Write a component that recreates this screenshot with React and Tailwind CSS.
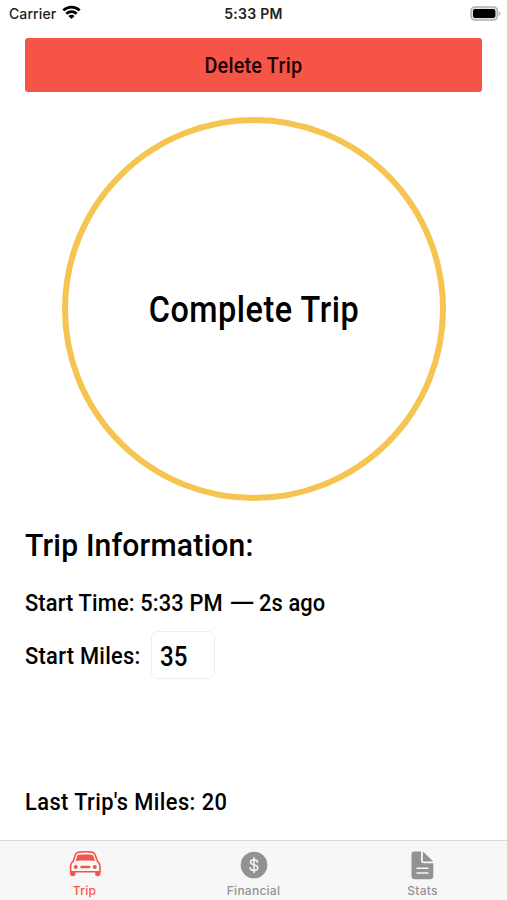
import clsx from 'clsx'

function WifiIcon() {
  return (
    <svg width="19" height="15" viewBox="0 0 19 15" fill="none" stroke="#000" strokeWidth="2.7">
      <path d="M1.3 5.4C5.9 .9 13.1 .9 17.7 5.4" />
      <path d="M4.3 8.7C7.3 5.9 11.7 5.9 14.7 8.7" />
      <path d="M9.5 14L6.4 10.9C8.2 9.4 10.8 9.4 12.6 10.9Z" fill="#000" stroke="none" />
    </svg>
  )
}

function BatteryIcon() {
  return (
    <svg width="31" height="15" viewBox="0 0 31 15">
      <rect x="1" y=".9" width="26.4" height="13.2" rx="4" fill="#e4e4e4" stroke="#b0b0b0" strokeWidth="1.5" />
      <rect x="3" y="2.9" width="22.4" height="9.2" rx="2" fill="#000" />
      <path d="M28.8 5.2C31 6 31 9 28.8 9.8Z" fill="#b0b0b0" />
    </svg>
  )
}

function CarIcon() {
  return (
    <svg width="33" height="26" viewBox="0 0 33 26" className="mb-[2px] ml-px">
      <g fill="none" stroke="currentColor" strokeWidth="1.6" strokeLinejoin="round">
        <path d="M4.2 10.2L6.5 3.6C7.2 1.8 8 1.3 10 1.1C14 .7 18.6 .7 22.6 1.1C24.6 1.3 25.4 1.8 26.1 3.6L28.4 10.2C30.5 11.8 31 13 31 15.3V20.8H1.6V15.3C1.6 13 2.1 11.8 4.2 10.2Z" />
      </g>
      <path d="M8.2 5C8.5 4.1 9 3.8 10 3.7C14.2 3.3 18.4 3.3 22.6 3.7C23.6 3.8 24.1 4.1 24.4 5L26 9.9C19.5 9.3 13.1 9.3 6.6 9.9Z" fill="currentColor" />
      <circle cx="6.8" cy="16" r="2" fill="currentColor" />
      <circle cx="25.8" cy="16" r="2" fill="currentColor" />
      <rect x="11.3" y="14.8" width="10" height="2.4" rx="1.2" fill="currentColor" />
      <path d="M.9 20H6.4V23.2C6.4 25.8 1.2 25.8 1.2 23.2Z" fill="currentColor" />
      <path d="M31.7 20H26.2V23.2C26.2 25.8 31.4 25.8 31.4 23.2Z" fill="currentColor" />
    </svg>
  )
}

function DollarIcon() {
  return (
    <svg width="28" height="28" viewBox="0 0 28 28">
      <circle cx="14" cy="14" r="13.3" fill="currentColor" />
      <path
        d="M17.6 11.2C17.3 9.6 16 8.8 14 8.8C11.9 8.8 10.5 9.8 10.5 11.3C10.5 12.8 11.7 13.4 14 13.9C16.4 14.4 17.8 15.1 17.8 16.8C17.8 18.4 16.3 19.4 14 19.4C11.8 19.4 10.3 18.5 10.1 16.8M14 6.8V21.4"
        fill="none"
        stroke="#f7f7f7"
        strokeWidth="1.5"
        strokeLinecap="round"
      />
    </svg>
  )
}

function DocIcon() {
  return (
    <svg width="23" height="29" viewBox="0 0 23 29">
      <path d="M3.2 .5H10V9.2C10 11.2 11 12.2 13 12.2H22.3V25C22.3 27.2 21.3 28.3 19 28.3H3.8C1.5 28.3 .5 27.2 .5 25V3.6C.5 1.5 1.3 .5 3.2 .5Z" fill="currentColor" />
      <path d="M11.8 .7C12.4 .9 12.9 1.3 13.5 1.9L20.8 9C21.4 9.6 21.8 10 22 10.6H13C12.1 10.6 11.8 10.2 11.8 9.4Z" fill="currentColor" />
      <path d="M6 17.3H17M6 22.1H17" stroke="#f7f7f7" strokeWidth="1.5" strokeLinecap="round" />
    </svg>
  )
}

const tabs = [
  { label: 'Trip', icon: CarIcon, active: true },
  { label: 'Financial', icon: DollarIcon },
  { label: 'Stats', icon: DocIcon },
]

function StatusBar() {
  return (
    <header className="grid h-[38px] grid-cols-3 pt-[5px] font-['Inter'] text-[14px] leading-[18px] text-[#222]">
      <div className="flex items-start gap-[6px] pl-[9px]">
        <span className="tracking-[0.1px]">Carrier</span>
        <WifiIcon />
      </div>
      <span className="text-center font-semibold tracking-[0.3px]">5:33 PM</span>
      <div className="flex justify-end pt-px pr-[6px]">
        <BatteryIcon />
      </div>
    </header>
  )
}

function TabBar() {
  return (
    <nav className="grid h-[60px] grid-cols-3 border-t border-[#d8d8d8] bg-[#f7f7f7]">
      {tabs.map(({ label, icon: Icon, active }) => (
        <button
          key={label}
          className={clsx('flex flex-col items-center pt-[9px]', active ? 'text-[#f25549]' : 'text-[#929292]')}
        >
          <span className="flex h-[30px] items-center">
            <Icon />
          </span>
          <span className="mt-[2px] font-['Inter'] text-[12px] leading-[17px] font-medium tracking-[0.25px]">{label}</span>
        </button>
      ))}
    </nav>
  )
}

export default function App() {
  return (
    <div className="flex h-[900px] w-[507px] flex-col overflow-hidden bg-white font-['Roboto'] font-medium text-black">
      <StatusBar />
      <main className="flex flex-1 flex-col items-start px-[25px]">
        <button className="h-[54px] w-full rounded-[3px] bg-[#f75448] pt-[2px] text-[22px] leading-[26px] text-[#180503]">
          <span className="inline-block scale-x-[0.9] tracking-[0.25px]">Delete Trip</span>
        </button>
        <button className="mt-[25px] ml-[37px] size-[384px] rounded-full border-[6px] border-[#f5c451] pt-[2px] text-[36px]">
          <span className="inline-block scale-x-[0.9] tracking-[0.6px]">Complete Trip</span>
        </button>
        <h1 className="mt-[25px] origin-left scale-x-[0.94] text-[32px] leading-[38px] tracking-[0.2px]">Trip Information:</h1>
        <p className="mt-[25px] flex h-[28px] text-[23.5px] leading-[28px] whitespace-pre">
          <span className="w-[204px] origin-left scale-x-[0.93] tracking-[0.15px]">Start Time: 5:33 PM</span>
          <span className="w-[30px] origin-left scale-x-[1.42]">—</span>
          <span className="origin-left scale-x-[0.93] tracking-[0.1px]">2s ago</span>
        </p>
        <div className="mt-[14px] flex h-[48px] items-center">
          <label htmlFor="miles" className="w-[126px] origin-left scale-x-[0.93] pt-[2px] text-[23.5px] leading-[28px] tracking-[0.3px] whitespace-nowrap">
            Start Miles:
          </label>
          <div className="h-[48px] w-[64px] rounded-[7px] border border-[#eeeeee] pl-[8px]">
            <input
              id="miles"
              defaultValue="35"
              className="h-full w-[54px] origin-left scale-x-[0.86] pt-[2px] text-[28px] outline-none"
            />
          </div>
        </div>
        <p className="mt-[109px] origin-left scale-x-[0.93] text-[23.5px] leading-[28px] tracking-[0.45px]">Last Trip's Miles: 20</p>
      </main>
      <TabBar />
    </div>
  )
}
